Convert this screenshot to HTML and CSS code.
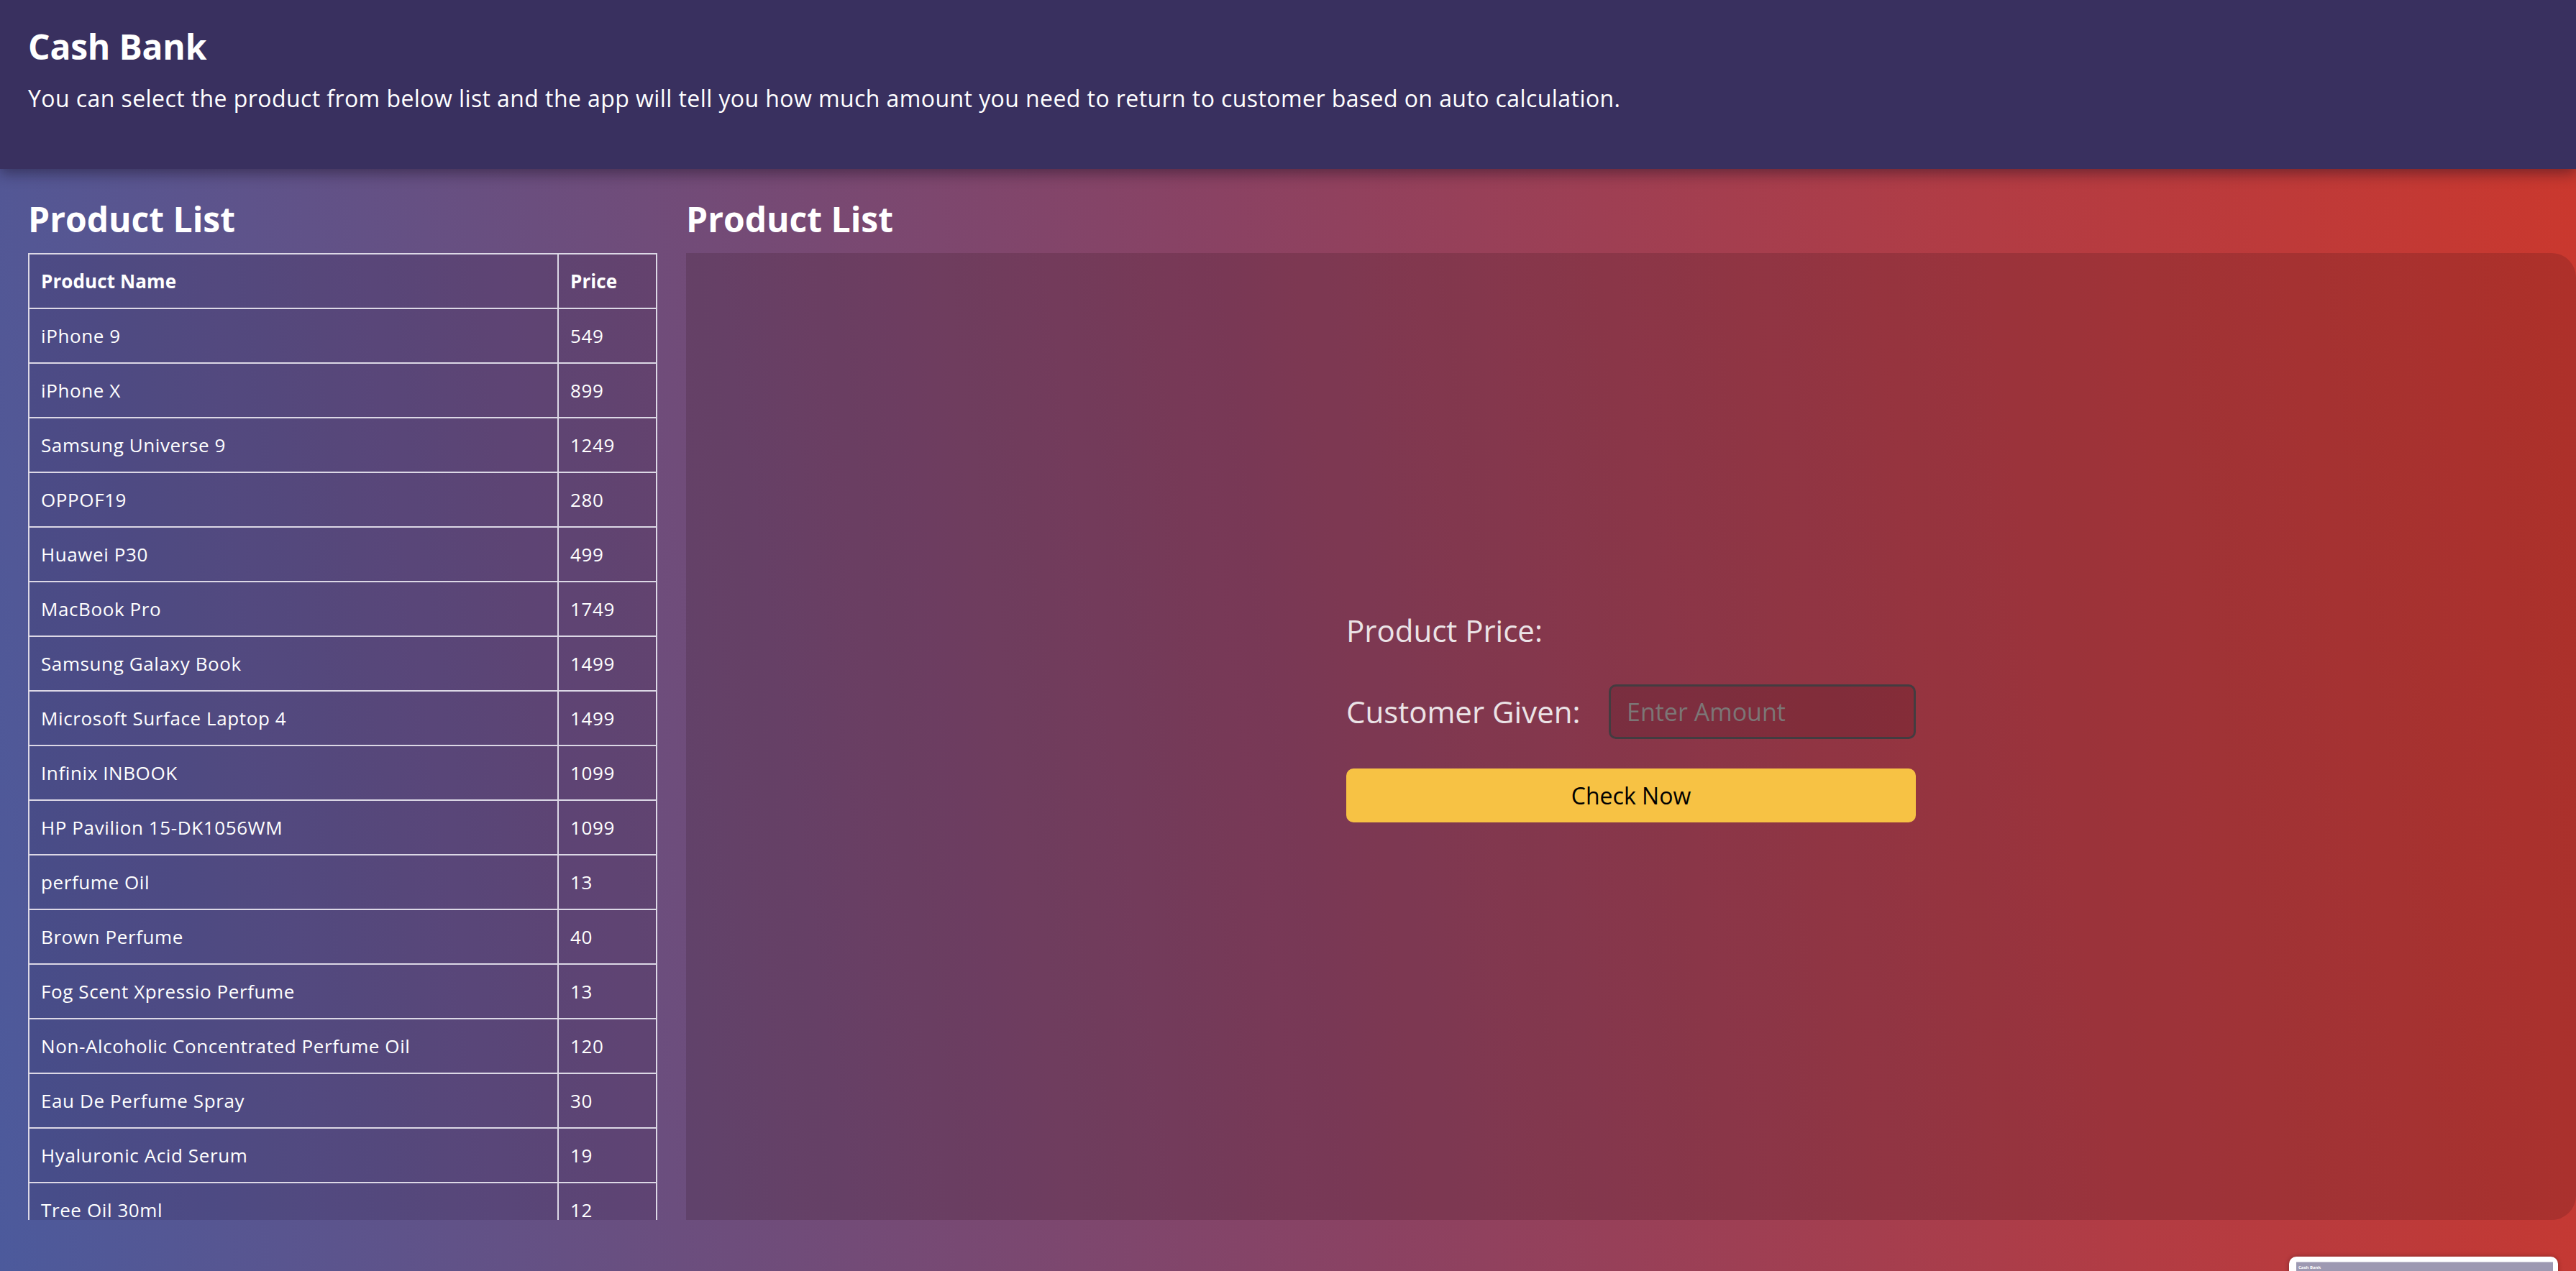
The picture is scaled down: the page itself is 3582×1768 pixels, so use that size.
FILE: index.html
```html
<!DOCTYPE html>
<html lang="en">
<head>
<meta charset="utf-8">
<title>Cash Bank</title>
<link rel="stylesheet" href="styles.css">
</head>
<body>
<header class="top">
  <h1 class="title">Cash Bank</h1>
  <p class="lead">You can select the product from below list and the app will tell you how much amount you need to return to customer based on auto calculation.</p>
</header>
<main class="main">
  <section class="col-list">
    <h2 class="section-title">Product List</h2>
    <div class="table-wrap">
      <table class="products">
        <colgroup><col><col class="col-price"></colgroup>
        <thead>
          <tr><th>Product Name</th><th>Price</th></tr>
        </thead>
        <tbody>
          <tr><td>iPhone 9</td><td>549</td></tr>
          <tr><td>iPhone X</td><td>899</td></tr>
          <tr><td>Samsung Universe 9</td><td>1249</td></tr>
          <tr><td>OPPOF19</td><td>280</td></tr>
          <tr><td>Huawei P30</td><td>499</td></tr>
          <tr><td>MacBook Pro</td><td>1749</td></tr>
          <tr><td>Samsung Galaxy Book</td><td>1499</td></tr>
          <tr><td>Microsoft Surface Laptop 4</td><td>1499</td></tr>
          <tr><td>Infinix INBOOK</td><td>1099</td></tr>
          <tr><td>HP Pavilion 15-DK1056WM</td><td>1099</td></tr>
          <tr><td>perfume Oil</td><td>13</td></tr>
          <tr><td>Brown Perfume</td><td>40</td></tr>
          <tr><td>Fog Scent Xpressio Perfume</td><td>13</td></tr>
          <tr><td>Non-Alcoholic Concentrated Perfume Oil</td><td>120</td></tr>
          <tr><td>Eau De Perfume Spray</td><td>30</td></tr>
          <tr><td>Hyaluronic Acid Serum</td><td>19</td></tr>
          <tr><td>Tree Oil 30ml</td><td>12</td></tr>
          <tr><td>Oil Free Moisturizer 100ml</td><td>40</td></tr>
          <tr><td>Skin Beauty Serum.</td><td>46</td></tr>
          <tr><td>Freckle Treatment Cream- 15gm</td><td>70</td></tr>
        </tbody>
      </table>
    </div>
  </section>
  <section class="col-calc">
    <h2 class="section-title">Product List</h2>
    <div class="calc-panel">
      <form class="calc-form">
        <div class="calc-row">Product Price:</div>
        <div class="calc-row calc-split">
          <label class="calc-label" for="given">Customer Given:</label>
          <input class="calc-input" id="given" type="text" placeholder="Enter Amount">
        </div>
        <button class="calc-btn" type="button">Check Now</button>
      </form>
    </div>
  </section>
</main>
<div class="shot-preview">
  <div class="shot-inner">
    <span class="shot-title">Cash Bank</span>
    <span class="shot-line"></span>
  </div>
</div>
</body>
</html>
```
FILE: styles.css
```css
* { box-sizing: border-box; }
html, body { margin: 0; padding: 0; }
body {
  font-family: "Open Sans", "Noto Sans", sans-serif;
  color: #fff;
  overflow: hidden;
  height: 100vh;
}
.top {
  position: relative;
  z-index: 2;
  background: #39305f;
  height: 235px;
  padding: 37px 39px 0;
  box-shadow: 0 6px 18px rgba(20, 10, 30, 0.45);
}
.title {
  margin: 0;
  font-size: 48px;
  line-height: 56px;
  font-weight: 700;
  letter-spacing: -0.2px;
}
.lead {
  margin: 24px 0 0;
  font-size: 32px;
  line-height: 40px;
  font-weight: 400;
  letter-spacing: 0.42px;
}
.main {
  display: flex;
  gap: 40px;
  height: calc(100vh - 235px);
  padding: 42px 0 71px 39px;
  background: linear-gradient(82deg, #4c5a9c 0%, #6b4e7e 25%, #8a4263 50%, #b23c44 78%, #ca382e 100%);
}
.col-list {
  width: 875px;
  flex: none;
  display: flex;
  flex-direction: column;
  min-height: 0;
}
.col-calc {
  flex: 1;
  display: flex;
  flex-direction: column;
  min-width: 0;
  min-height: 0;
}
.section-title {
  margin: 0 0 19px;
  font-size: 48px;
  line-height: 56px;
  font-weight: 700;
}
.table-wrap {
  flex: 1;
  min-height: 0;
  overflow: hidden;
}
.products {
  width: 100%;
  border-collapse: collapse;
  table-layout: fixed;
  background: rgba(30, 10, 40, 0.14);
  font-size: 26px;
}
.col-price { width: 137px; }
.products th,
.products td {
  border: 2px solid #dcd8e6;
  height: 76px;
  padding: 0 16px;
  text-align: left;
  vertical-align: middle;
  white-space: nowrap;
}
.products td { letter-spacing: 0.6px; }
.products th { font-weight: 700; letter-spacing: 0.1px; }
.calc-panel {
  flex: 1;
  display: flex;
  align-items: center;
  justify-content: center;
  padding-bottom: 54px;
  background: rgba(40, 10, 20, 0.17);
  border-radius: 0 34px 34px 0;
}
.calc-form {
  width: 792px;
  display: flex;
  flex-direction: column;
}
.calc-row {
  font-size: 42px;
  line-height: 50px;
  color: #ebe3e6;
}
.calc-split {
  display: flex;
  align-items: center;
  justify-content: space-between;
  margin-top: 50px;
}
.calc-label { font-size: 42px; }
.calc-input {
  width: 427px;
  height: 76px;
  border: 3px solid #433c40;
  border-radius: 10px;
  background: rgba(60, 10, 20, 0.18);
  padding: 0 22px;
  font-family: inherit;
  font-size: 34px;
  color: #eee;
  outline: none;
}
.calc-input::placeholder { color: #7c7676; }
.calc-btn {
  margin-top: 41px;
  height: 75px;
  border: 0;
  border-radius: 10px;
  background: #f7c244;
  color: #000;
  font-family: inherit;
  font-size: 32px;
}
.shot-preview {
  position: fixed;
  left: 3183px;
  top: 1748px;
  width: 374px;
  height: 60px;
  background: #fff;
  border-radius: 10px;
  padding: 7px 7px 0 10px;
  box-shadow: 0 0 6px rgba(0, 0, 0, 0.3);
}
.shot-inner {
  display: flex;
  flex-direction: column;
  height: 100%;
  background: #9d99b2;
  border-top: 1px solid #d6d4de;
  padding: 4px 3px;
  gap: 3px;
}
.shot-title {
  font-size: 6px;
  font-weight: 700;
  line-height: 7px;
}
.shot-line {
  display: block;
  height: 2px;
  width: 230px;
  background: rgba(255, 255, 255, 0.35);
}
```
